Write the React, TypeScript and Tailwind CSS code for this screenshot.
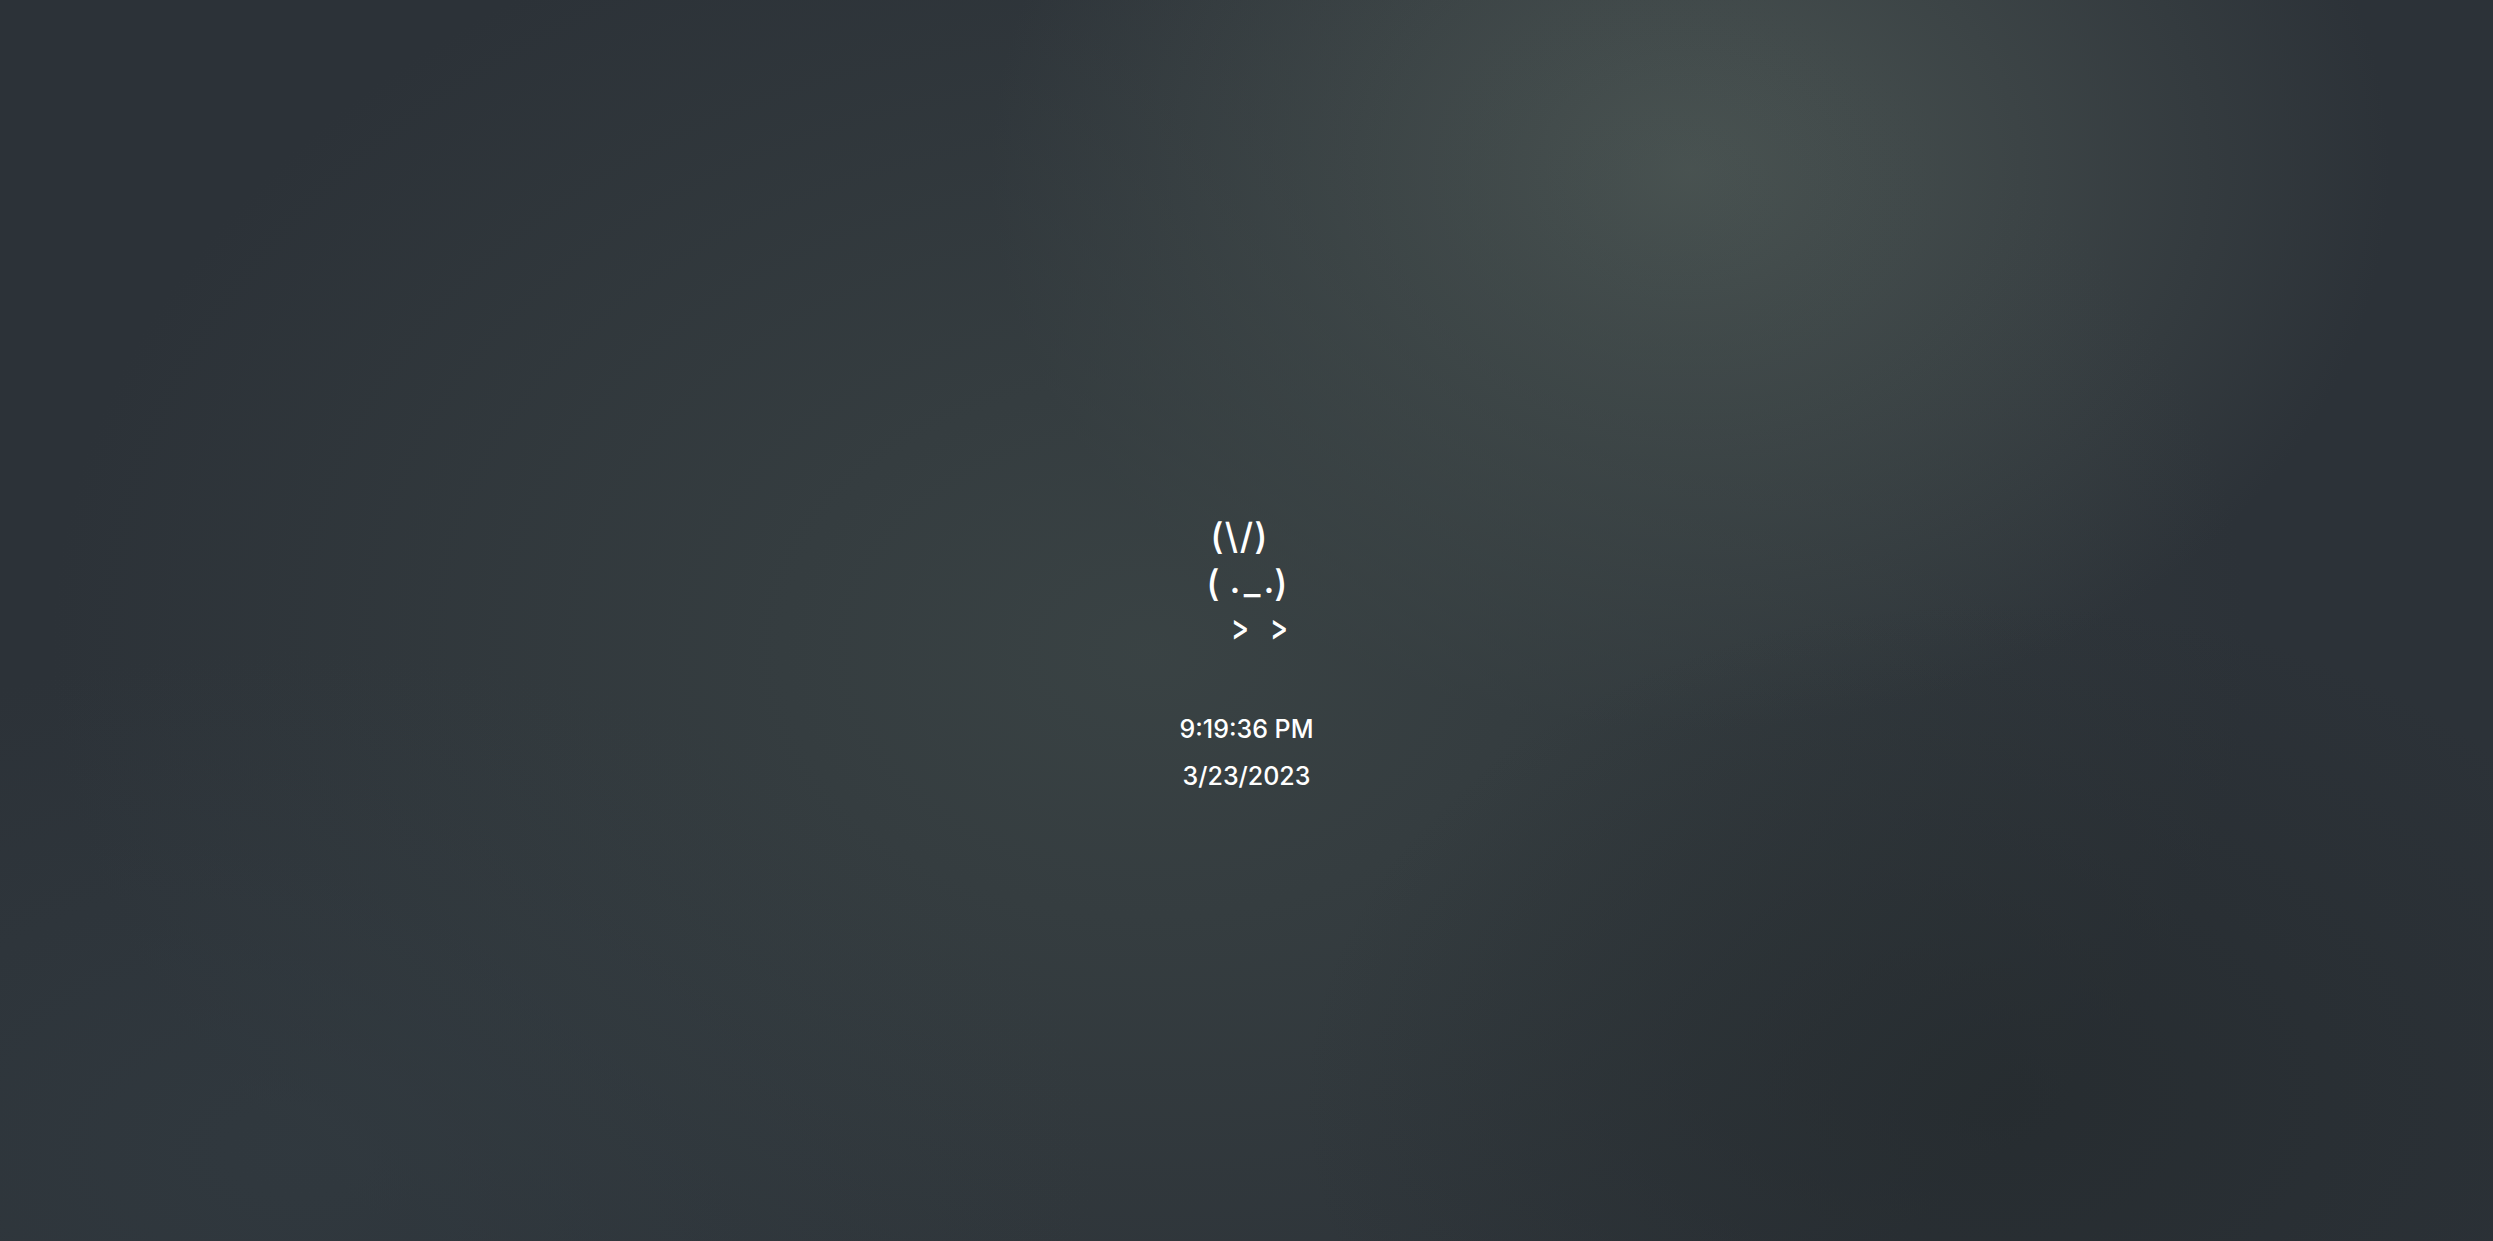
export default function App() {
  return (
    <div
      className="relative flex h-[1241px] w-[2493px] flex-col items-center overflow-hidden bg-[#2c3238] text-white"
      style={{ fontFamily: 'Inter, "Liberation Sans", sans-serif' }}
    >
      <div className="absolute inset-0 bg-[radial-gradient(ellipse_700px_560px_at_1690px_170px,rgba(76,86,84,0.95),rgba(76,86,84,0)_100%)]" />
      <div className="absolute inset-0 bg-[radial-gradient(ellipse_1100px_800px_at_1150px_650px,rgba(62,72,72,0.75),rgba(62,72,72,0)_100%)]" />
      <div className="absolute inset-0 bg-[radial-gradient(ellipse_700px_500px_at_2000px_1100px,rgba(36,42,45,0.7),rgba(36,42,45,0)_100%)]" />
      <div className="absolute inset-0 bg-[radial-gradient(ellipse_800px_500px_at_300px_1150px,rgba(52,62,68,0.55),rgba(52,62,68,0)_100%)]" />
      <div className="relative flex flex-col items-center pt-[518px]">
        <div className="flex w-[85px] flex-col text-[36px] leading-[36px] font-medium">
          <div className="flex h-[47px] pl-[6px]">
            <span className="w-[14px] text-center">(</span>
            <span className="w-[15px] text-center">\</span>
            <span className="w-[15px] text-center">/</span>
            <span className="w-[14px] text-center">)</span>
          </div>
          <div className="flex h-[44px] pl-[2px]">
            <span className="w-[14px] text-center">(</span>
            <span className="ml-[8px] w-[14px] -translate-y-[3px] text-center">.</span>
            <span className="w-[20px] -translate-y-[2px] text-center">_</span>
            <span className="w-[14px] -translate-y-[3px] text-center">.</span>
            <span className="-ml-[2px] w-[14px] text-center">)</span>
          </div>
          <div className="flex h-[36px] pl-[25px]">
            <span className="w-[16px] scale-x-75 text-center">&gt;</span>
            <span className="ml-[23px] w-[16px] scale-x-75 text-center">&gt;</span>
          </div>
        </div>
        <div className="mt-[69px] text-[25px] leading-[30px] font-medium">9:19:36 PM</div>
        <div className="mt-[17px] text-[25px] leading-[30px] font-medium">3/23/2023</div>
      </div>
    </div>
  );
}
